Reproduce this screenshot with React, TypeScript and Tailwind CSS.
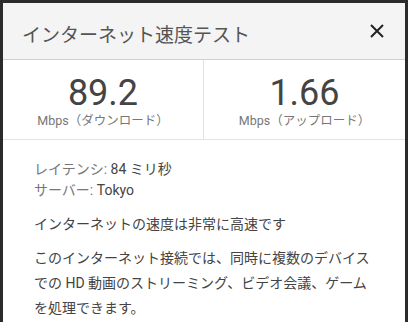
export default function App() {
  const font = { fontFamily: 'Roboto, "Noto Sans CJK JP", sans-serif' };
  return (
    <div className="w-[408px] h-[322px] overflow-hidden bg-[#2b2b2b] pt-[3px] px-[3px]" style={font}>
      <div className="h-full bg-white">
        {/* header */}
        <div className="h-[57px] bg-[#f4f4f4] border-b border-[#cfcfcf] flex items-center justify-between pl-[19px] pr-[20px]">
          <span className="text-[19px] text-[#555] mt-[10px]">インターネット速度テスト</span>
          <svg width="16" height="16" viewBox="0 0 16 16" className="mt-[0px]">
            <path d="M2 2 L14 14 M14 2 L2 14" stroke="#222" strokeWidth="2" />
          </svg>
        </div>

        {/* speeds */}
        <div className="grid grid-cols-2 border-b border-[#e3e3e3] h-[80px]">
          <div className="flex flex-col items-center pt-[15px] border-r border-[#e3e3e3]">
            <span className="text-[36px] leading-[36px] text-[#444]">89.2</span>
            <span className="text-[12.5px] text-[#777] mt-[1px]">Mbps（ダウンロード）</span>
          </div>
          <div className="flex flex-col items-center pt-[15px]">
            <span className="text-[36px] leading-[36px] text-[#444]">1.66</span>
            <span className="text-[12.5px] text-[#777] mt-[1px]">Mbps（アップロード）</span>
          </div>
        </div>

        {/* details */}
        <div className="pl-[31px] pt-[19px] text-[14px] w-[372px]">
          <div className="text-[#777] leading-[21px]">
            <div>レイテンシ: <span className="text-[#444]">84 ミリ秒</span></div>
            <div>サーバー: <span className="text-[#444]">Tokyo</span></div>
          </div>
          <p className="text-[#444] mt-[13px] leading-[20px]">インターネットの速度は非常に高速です</p>
          <p className="text-[#444] mt-[12px] leading-[25px]">
            このインターネット接続では、同時に複数のデバイスでの HD 動画のストリーミング、ビデオ会議、ゲームを処理できます。
          </p>
        </div>
      </div>
    </div>
  );
}
